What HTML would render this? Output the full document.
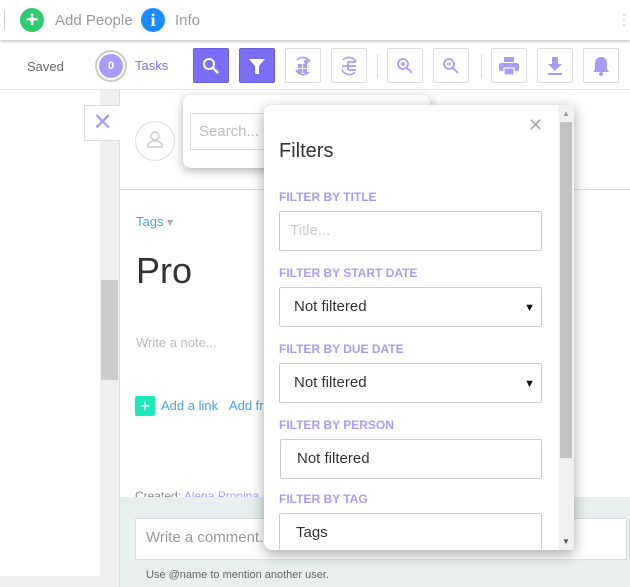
<!DOCTYPE html>
<html><head><meta charset="utf-8"><style>
*{box-sizing:border-box;margin:0;padding:0}
body{width:630px;height:587px;overflow:hidden;position:relative;font-family:"Liberation Sans",sans-serif;background:#fff}
.a{position:absolute}
.btn{position:absolute;top:48px;width:36px;height:35px;border:1px solid #ddd;border-radius:2px;background:#fff;display:flex;align-items:center;justify-content:center}
.btn.on{background:#7b6ef6;border-color:#6a5de0}
.lbl{position:absolute;left:15px;font-size:12px;font-weight:bold;color:#a99cf7}
.inp{position:absolute;left:15px;width:263px;height:40px;border:1px solid #ccc;border-radius:2px;font-size:15px;color:#333;padding:10px 14px}
</style></head><body>
<!-- top bar -->
<div class="a" style="left:0;top:0;width:630px;height:40px;background:#fff;box-shadow:0 2px 3px rgba(0,0,0,.2)"></div>
<div class="a" style="left:4px;top:10px;width:1px;height:20px;background:#ccc"></div>
<div class="a" style="left:20px;top:8px;width:24px;height:24px;border-radius:50%;background:#2ecc71;color:#fff;font-weight:bold;font-size:22px;line-height:24px;text-align:center">+</div>
<div class="a" style="left:55px;top:12px;font-size:15px;color:#999">Add People</div>
<div class="a" style="left:141px;top:8px;width:24px;height:24px;border-radius:50%;background:#1a8cff;color:#fff;font-weight:bold;font-size:18px;line-height:24px;text-align:center;font-family:'Liberation Serif',serif">i</div>
<div class="a" style="left:175px;top:12px;font-size:15px;color:#999">Info</div>
<div class="a" style="left:622px;top:12px;color:#aaa;font-size:12px;line-height:5px">·<br>·<br>·</div>
<!-- toolbar -->
<div class="a" style="left:0;top:89px;width:630px;height:1px;background:#e6e6e6"></div>
<div class="a" style="left:27px;top:59px;font-size:13px;color:#666">Saved</div>
<div class="a" style="left:95px;top:50px;width:32px;height:32px;border-radius:50%;border:2px solid #ccc;background:#fff"></div>
<div class="a" style="left:99px;top:54px;width:24px;height:24px;border-radius:50%;background:#a99cf7;color:#fff;font-size:11px;font-weight:bold;line-height:24px;text-align:center">0</div>
<div class="a" style="left:135px;top:58px;font-size:13px;color:#7b6ef6">Tasks</div>
<div class="btn on" style="left:193px"><svg width="18" height="18" viewBox="0 0 18 18"><circle cx="7" cy="7" r="5" stroke="#fff" stroke-width="2" fill="none"/><path d="M11 11l5 5" stroke="#fff" stroke-width="2.4"/></svg></div>
<div class="btn on" style="left:239px"><svg width="18" height="18" viewBox="0 0 18 18"><path d="M1 2h16l-6 7v8h-4v-8z" fill="#fff"/></svg></div>
<div class="btn" style="left:285px"><svg width="22" height="22" viewBox="0 0 22 22"><path d="M5 5a8 8 0 0 1 13 2M17 17a8 8 0 0 1-13-2" stroke="#a99cf7" stroke-width="1.6" fill="none"/><rect x="6" y="9" width="4" height="4" fill="#a99cf7"/><rect x="11" y="9" width="4" height="4" fill="#a99cf7"/><rect x="6" y="14" width="4" height="4" fill="#a99cf7"/><rect x="11" y="14" width="4" height="4" fill="#a99cf7"/><rect x="12" y="5" width="4" height="4" fill="#a99cf7" transform="rotate(45 14 7)"/></svg></div>
<div class="btn" style="left:331px"><svg width="22" height="22" viewBox="0 0 22 22"><path d="M5 5a8 8 0 0 1 13 2M17 17a8 8 0 0 1-13-2" stroke="#a99cf7" stroke-width="1.6" fill="none"/><path d="M4 11h6M10 7v8M10 7h8M10 11h8M10 15h8" stroke="#a99cf7" stroke-width="1.8"/></svg></div>
<div class="a" style="left:377px;top:54px;width:1px;height:24px;background:#ddd"></div>
<div class="btn" style="left:387px"><svg width="18" height="18" viewBox="0 0 18 18"><circle cx="7" cy="7" r="5" stroke="#a99cf7" stroke-width="1.8" fill="none"/><path d="M11 11l5 5M5 7h4M7 5v4" stroke="#a99cf7" stroke-width="1.8"/></svg></div>
<div class="btn" style="left:433px"><svg width="18" height="18" viewBox="0 0 18 18"><circle cx="7" cy="7" r="5" stroke="#a99cf7" stroke-width="1.8" fill="none"/><path d="M11 11l5 5M5 7h4" stroke="#a99cf7" stroke-width="1.8"/></svg></div>
<div class="a" style="left:481px;top:54px;width:1px;height:24px;background:#ddd"></div>
<div class="btn" style="left:491px"><svg width="22" height="20" viewBox="0 0 22 20"><rect x="6" y="1" width="10" height="5" fill="#a99cf7"/><rect x="1" y="7" width="20" height="8" rx="2" fill="#a99cf7"/><rect x="6" y="12" width="10" height="7" fill="#a99cf7" stroke="#fff" stroke-width="1.2"/></svg></div>
<div class="btn" style="left:537px"><svg width="18" height="20" viewBox="0 0 18 20"><path d="M6 1h6v7h4l-7 7-7-7h4z" fill="#a99cf7"/><rect x="2" y="17" width="14" height="2" fill="#a99cf7"/></svg></div>
<div class="btn" style="left:583px"><svg width="18" height="20" viewBox="0 0 18 20"><path d="M9 1c4 0 6 3 6 7v5l2 3H1l2-3V8c0-4 2-7 6-7z" fill="#a99cf7"/><circle cx="9" cy="18" r="2" fill="#a99cf7"/></svg></div>
<!-- left -->
<div class="a" style="left:100px;top:90px;width:20px;height:497px;background:#efefef;border-right:1px solid #ddd"></div>
<div class="a" style="left:101px;top:280px;width:17px;height:100px;background:#ccc"></div>
<div class="a" style="left:0;top:576px;width:100px;height:11px;background:#efefef"></div>
<div class="a" style="left:84px;top:105px;width:36px;height:36px;background:#fff;border:1px solid #ddd;border-right:none;color:#a99cf7;font-size:24px;text-align:center;line-height:34px">✕</div>
<!-- main -->
<div class="a" style="left:135px;top:121px;width:40px;height:40px;border-radius:50%;border:1px solid #ddd"></div>
<svg class="a" style="left:145px;top:130px" width="20" height="20" viewBox="0 0 20 20"><circle cx="10" cy="6" r="4" stroke="#ccc" stroke-width="1.6" fill="none"/><path d="M3 17v-2c0-2 3-4 7-4s7 2 7 4v2z" stroke="#ccc" stroke-width="1.6" fill="none"/></svg>
<div class="a" style="left:120px;top:189px;width:510px;height:1px;background:#ddd"></div>
<div class="a" style="left:136px;top:214px;font-size:13px;color:#4aa3df">Tags <span style="color:#aaa;font-size:12px">▾</span></div>
<div class="a" style="left:136px;top:250px;font-size:36px;color:#333;font-weight:100">Pro</div>
<div class="a" style="left:136px;top:335px;font-size:13px;color:#bbb">Write a note...</div>
<div class="a" style="left:135px;top:396px;width:20px;height:20px;border-radius:2px;background:#1de9b6;color:#fff;text-align:center;line-height:20px;font-size:18px">+</div>
<div class="a" style="left:161px;top:398px;font-size:13px;color:#4aa3df">Add a link&nbsp;&nbsp;&nbsp;Add fr</div>
<div class="a" style="left:135px;top:489px;font-size:12px;color:#888">Created: <span style="color:#a99cf7">Alena Pronina</span></div>
<div class="a" style="left:120px;top:497px;width:510px;height:90px;background:#e8efee"></div>
<div class="a" style="left:135px;top:518px;width:492px;height:42px;background:#fff;border:1px solid #ddd;font-size:15px;color:#999;padding:10px 10px">Write a comment...</div>
<div class="a" style="left:146px;top:569px;font-size:11px;color:#666">Use @name to mention another user.</div>
<!-- search popup -->
<div class="a" style="left:183px;top:95px;width:247px;height:73px;background:#fff;border-radius:8px;box-shadow:0 3px 10px rgba(0,0,0,.3)"></div>
<div class="a" style="left:190px;top:113px;width:100px;height:37px;border:1px solid #ddd;font-size:15px;color:#bbb;padding:9px 8px">Search...</div>
<!-- filters -->
<div class="a" style="left:264px;top:105px;width:310px;height:445px;background:#fff;border-radius:8px 0 0 8px;box-shadow:0 4px 14px rgba(0,0,0,.35);overflow:hidden">
 <div class="a" style="left:294px;top:0;width:16px;height:445px;background:#f1f1f1"></div>
 <div class="a" style="left:296px;top:17px;width:12px;height:336px;background:#c1c1c1"></div>
 <div class="a" style="left:298px;top:4px;font-size:8px;color:#999">▲</div>
 <div class="a" style="left:298px;top:432px;font-size:8px;color:#555">▼</div>
 <div class="a" style="left:264px;top:10px;font-size:18px;color:#aaa">✕</div>
 <div class="a" style="left:15px;top:35px;font-size:20px;color:#333">Filters</div>
 <div class="lbl" style="top:85px">FILTER BY TITLE</div>
 <div class="inp" style="top:106px;color:#ccc;padding-left:10px">Title...</div>
 <div class="lbl" style="top:161px">FILTER BY START DATE</div>
 <div class="inp" style="top:182px">Not filtered<span style="position:absolute;right:6px;top:14px;font-size:11px;color:#111">▼</span></div>
 <div class="lbl" style="top:237px">FILTER BY DUE DATE</div>
 <div class="inp" style="top:258px">Not filtered<span style="position:absolute;right:6px;top:14px;font-size:11px;color:#111">▼</span></div>
 <div class="lbl" style="top:313px">FILTER BY PERSON</div>
 <div class="inp" style="top:334px;left:16px;width:262px;padding-left:16px">Not filtered</div>
 <div class="lbl" style="top:387px">FILTER BY TAG</div>
 <div class="inp" style="top:408px;height:50px;padding-left:16px">Tags</div>
</div>
</body></html>
